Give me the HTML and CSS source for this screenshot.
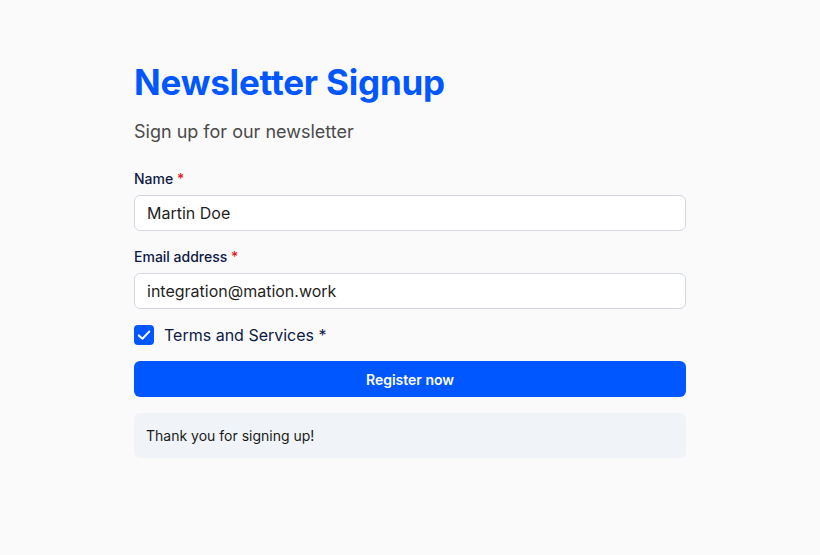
FILE: index.html
```html
<!DOCTYPE html>
<html lang="en">
<head>
    <meta charset="UTF-8">
    <meta name="viewport" content="width=device-width, initial-scale=1.0">
    <title>Newsletter Signup</title>
    <link rel="stylesheet" href="styles.css">
</head>
<body>

    <form class="signup" id="signupForm">
        <h1 class="title">Newsletter Signup</h1>
        <p class="subtitle">Sign up for our newsletter</p>

        <div class="field">
            <label for="name">Name <span class="req">*</span></label>
            <input type="text" id="name" value="Martin Doe">
        </div>

        <div class="field">
            <label for="email">Email address <span class="req">*</span></label>
            <input type="email" id="email" value="integration@mation.work">
        </div>

        <label class="check" for="terms">
            <input type="checkbox" id="terms" checked>
            <span class="box">
                <svg viewBox="0 0 20 20" width="20" height="20"><path d="M4.8 10.4 L8.4 13.8 L15.2 6.6" fill="none" stroke="#fff" stroke-width="2" stroke-linecap="round" stroke-linejoin="round"/></svg>
            </span>
            Terms and Services *
        </label>

        <button type="button" class="submit">Register now</button>

        <div class="message">Thank you for signing up!</div>
    </form>

</body>
</html>
```

FILE: styles.css
```css
body {
    font-family: Inter, "Noto Sans", sans-serif;
    background-color: #fafafa;
    margin: 0;
    padding: 0;
}

.signup {
    width: 552px;
    margin: 0 0 0 134px;
    padding-top: 59px;
    display: flex;
    flex-direction: column;
}

.title {
    font-size: 35px;
    font-weight: 700;
    color: #0057ff;
    margin: 0;
    line-height: 46px;
    letter-spacing: -0.2px;
}

.subtitle {
    font-size: 18px;
    color: #4a4a4a;
    margin: 15px 0 0;
    line-height: 24px;
}

.field {
    display: flex;
    flex-direction: column;
    margin-top: 26px;
}

.field + .field {
    margin-top: 17px;
}

.field label {
    font-size: 14px;
    font-weight: 500;
    color: #0e1a45;
    line-height: 18px;
    margin-bottom: 7px;
}

.req {
    color: #d92020;
}

.field input {
    font-family: inherit;
    font-size: 16px;
    color: #1f1f1f;
    height: 36px;
    box-sizing: border-box;
    padding: 0 12px;
    border: 1px solid #d3d8e0;
    border-radius: 6px;
    background-color: #fff;
    outline: none;
}

.check {
    display: flex;
    align-items: center;
    gap: 10px;
    margin-top: 16px;
    font-size: 16px;
    color: #0e1a45;
    line-height: 20px;
    cursor: pointer;
}

.check input {
    display: none;
}

.box {
    width: 20px;
    height: 20px;
    border-radius: 4px;
    background-color: #0057ff;
    display: flex;
}

.submit {
    margin-top: 16px;
    height: 36px;
    border: none;
    border-radius: 6px;
    background-color: #0057ff;
    color: #fff;
    font-family: inherit;
    font-size: 14px;
    font-weight: 600;
    cursor: pointer;
}

.message {
    margin-top: 16px;
    padding: 0 12px;
    height: 45px;
    display: flex;
    align-items: center;
    background-color: #f0f3f7;
    border-radius: 6px;
    font-size: 14px;
    color: #1a1a1a;
}
```
